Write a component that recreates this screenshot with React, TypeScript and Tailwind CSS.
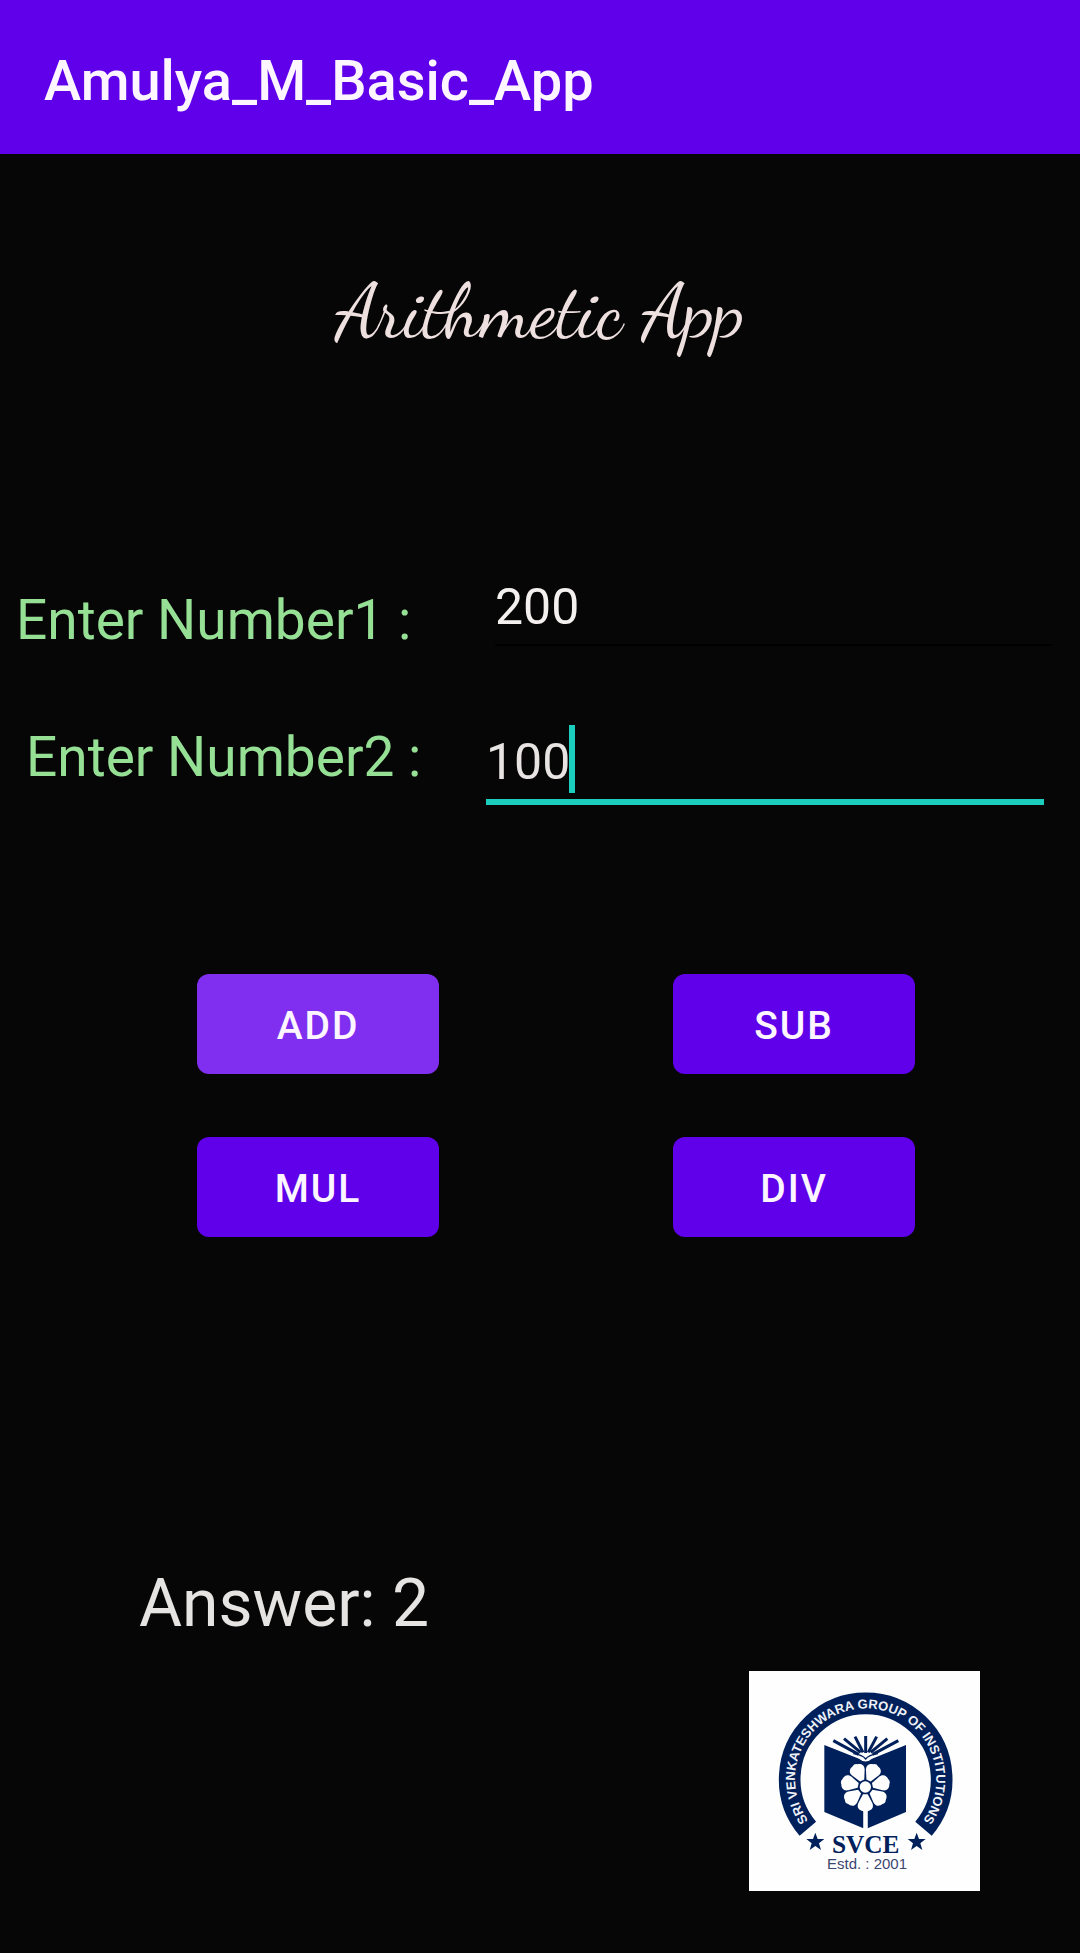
import { useState } from "react";

const NAVY = "#00205b";

const rays = [
  [280, 243, 356, 284],
  [312, 237, 362, 278],
  [345, 231, 369, 278],
  [377, 229, 377, 280],
  [410, 231, 385, 278],
  [442, 237, 392, 278],
  [475, 243, 398, 284],
];

const petals = [0, 1, 2, 3, 4, 5, 6].map((n) => (n * 360) / 7);

function Star({ x, y }: { x: number; y: number }) {
  return (
    <path
      transform={`translate(${x} ${y})`}
      fill={NAVY}
      d="M0-28 7-9H27L11 4 17 24 0 12-17 24-11 4-27-9H-7Z"
    />
  );
}

function CollegeLogo() {
  return (
    <svg
      role="img"
      aria-label="SVCE college logo"
      viewBox="27 34 693 660"
      className="h-[220px] w-[231px] bg-[#fefefe]"
    >
      <path d="M203.500 507A228 228 0 1 1 550.500 507" fill="none" stroke={NAVY} strokeWidth="65" />
      <path id="motto" d="M224 505A212 212 0 1 1 530 505" fill="none" />
      <text fill="#eef1f8" fontFamily="Liberation Sans, sans-serif" fontSize="39" fontWeight="700" textAnchor="middle">
        <textPath href="#motto" startOffset="50%">
          SRI VENKATESHWARA GROUP OF INSTITUTIONS
        </textPath>
      </text>
      {rays.map(([x1, y1, x2, y2]) => (
        <line key={x1} x1={x1} y1={y1} x2={x2} y2={y2} stroke={NAVY} strokeWidth="9" />
      ))}
      <path fill={NAVY} d="M253 256 357 297Q377 314 396 297L498 256V457L383 506V440H370V506L253 457Z" />
      <path fill="none" stroke={NAVY} strokeWidth="4" d="M340 282Q368 286 377 298Q386 286 414 282" />
      <g transform="translate(376 382)" fill="#fefefe">
        {petals.map((angle) => (
          <path
            key={angle}
            transform={`rotate(${angle})`}
            d="M-7 22L-21 48C-27 62-18 70-8 72Q0 78 8 72C18 70 27 62 21 48L7 22Z"
          />
        ))}
        <circle r="17" />
      </g>
      <rect x="371" y="450" width="11" height="60" fill="#fefefe" />
      <Star x={226} y={547} />
      <Star x={530} y={547} />
      <text x="377" y="580" fill={NAVY} fontFamily="Liberation Serif, serif" fontSize="76" fontWeight="700" textAnchor="middle">
        SVCE
      </text>
      <text x="381" y="628" fill="#3a4772" fontFamily="Liberation Sans, sans-serif" fontSize="45" textAnchor="middle">
        Estd. : 2001
      </text>
    </svg>
  );
}

function OperationButton({ label, pressed = false }: { label: string; pressed?: boolean }) {
  return (
    <button
      type="button"
      className={`h-[100px] w-[242px] rounded-xl pt-1 text-[39px] font-medium tracking-wider text-[#fdf5ff] ${
        pressed ? "bg-[#802ef0]" : "bg-[#6000ea]"
      }`}
    >
      {label}
    </button>
  );
}

export default function App() {
  const [first, setFirst] = useState("200");
  const [second, setSecond] = useState("100");

  return (
    <div className="min-h-screen bg-[#060606] font-[Roboto,sans-serif]">
      <header className="flex h-[154px] items-center bg-[#6000ea] px-11 pt-2">
        <h1 className="text-[56px] leading-[64px] font-medium text-[#fdf5ff]">Amulya_M_Basic_App</h1>
      </header>

      <main className="flex flex-col">
        <h2 className="mt-[110px] text-center font-['Dancing_Script',cursive] text-[77px] leading-[96px] text-[#efe0e0]">
          Arithmetic App
        </h2>

        <form className="mt-[206px] flex flex-col gap-[79px]">
          <div className="flex items-end pr-7 pl-4">
            <label htmlFor="number1" className="w-[479px] text-[55px] leading-[52px] text-[#96e096]">
              Enter Number1 :
            </label>
            <input
              id="number1"
              inputMode="numeric"
              value={first}
              onChange={(e) => setFirst(e.target.value)}
              className="h-20 min-w-0 flex-1 border-b-2 border-black bg-transparent pt-1 text-[50px] text-[#f5f0f0] outline-none"
            />
          </div>
          <div className="flex items-start pr-9 pl-[26px]">
            <label htmlFor="number2" className="w-[460px] text-[55px] leading-[64px] text-[#96e096]">
              Enter Number2 :
            </label>
            <div className="relative flex min-w-0 flex-1">
              <input
                id="number2"
                inputMode="numeric"
                value={second}
                onChange={(e) => setSecond(e.target.value)}
                className="h-20 min-w-0 flex-1 border-b-6 border-[#1acdbc] bg-transparent text-[50px] text-[#e8e4e4] caret-transparent outline-none"
              />
              <span className="absolute top-0 left-[83px] h-[68px] w-1.5 bg-[#1acdbc]" />
            </div>
          </div>
        </form>

        <div className="mt-[169px] grid grid-cols-2 justify-items-center gap-y-[63px] pr-12 pl-20">
          <OperationButton label="ADD" pressed />
          <OperationButton label="SUB" />
          <OperationButton label="MUL" />
          <OperationButton label="DIV" />
        </div>

        <output className="mt-[327px] ml-[139px] text-[66px] leading-[80px] text-[#e6e4e2]">Answer: 2</output>

        <div className="mt-[27px] mr-[100px] self-end">
          <CollegeLogo />
        </div>
      </main>
    </div>
  );
}
